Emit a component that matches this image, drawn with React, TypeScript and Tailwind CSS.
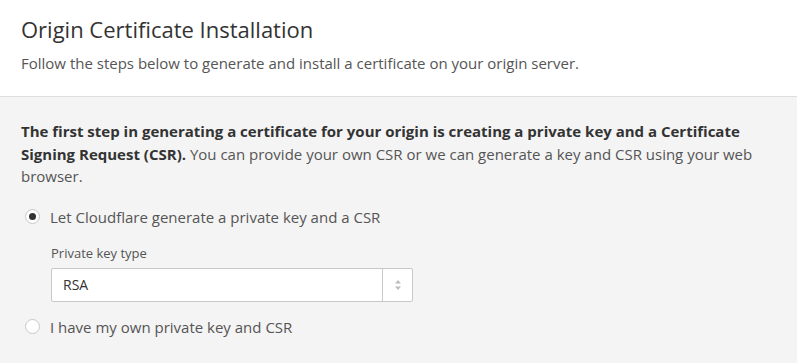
import React from "react";

export default function App() {
  return (
    <div className="w-[797px] h-[363px] overflow-hidden bg-[#f4f4f4] text-[#333] [font-family:'Open_Sans',sans-serif]">
      <div className="bg-white border-b border-[#dedede] h-[97px] px-[21px] pt-[14px]">
        <h1 className="text-[22px] leading-[30px] text-[#333] font-normal">Origin Certificate Installation</h1>
        <p className="mt-[9px] text-[15px] leading-[20px] text-[#555]">
          Follow the steps below to generate and install a certificate on your origin server.
        </p>
      </div>
      <div className="px-[21px] pt-[23px]">
        <p className="text-[15px] leading-[22.5px] text-[#555] w-[750px]">
          <strong className="font-bold text-[#333]">
            The first step in generating a certificate for your origin is creating a private key and a Certificate Signing Request (CSR).
          </strong>{" "}
          You can provide your own CSR or we can generate a key and CSR using your web browser.
        </p>
        <label className="mt-[19px] flex items-center gap-[10px] pl-[4px] text-[15px] text-[#555] leading-[20px]">
          <span className="w-[15px] h-[15px] rounded-full border border-[#c8c8c8] bg-white flex items-center justify-center">
            <span className="w-[7px] h-[7px] rounded-full bg-[#333]" />
          </span>
          Let Cloudflare generate a private key and a CSR
        </label>
        <div className="pl-[30px] mt-[18px]">
          <div className="text-[13px] leading-[16px] text-[#555]">Private key type</div>
          <div className="mt-[7px] w-[362px] h-[34px] bg-white border border-[#c8c8c8] rounded-[2px] flex">
            <div className="flex-1 flex items-center pl-[11px] text-[14px] text-[#333]">RSA</div>
            <div className="w-[30px] border-l border-[#c8c8c8] flex items-center justify-center">
              <svg width="8" height="12" viewBox="0 0 8 12">
                <path d="M4 1 L7 4.5 H1 Z" fill="#bbb" />
                <path d="M4 11 L7 7.5 H1 Z" fill="#bbb" />
              </svg>
            </div>
          </div>
        </div>
        <label className="mt-[15px] flex items-center gap-[10px] pl-[4px] text-[15px] text-[#555] leading-[20px]">
          <span className="w-[15px] h-[15px] rounded-full border border-[#c8c8c8] bg-white" />
          I have my own private key and CSR
        </label>
      </div>
    </div>
  );
}
